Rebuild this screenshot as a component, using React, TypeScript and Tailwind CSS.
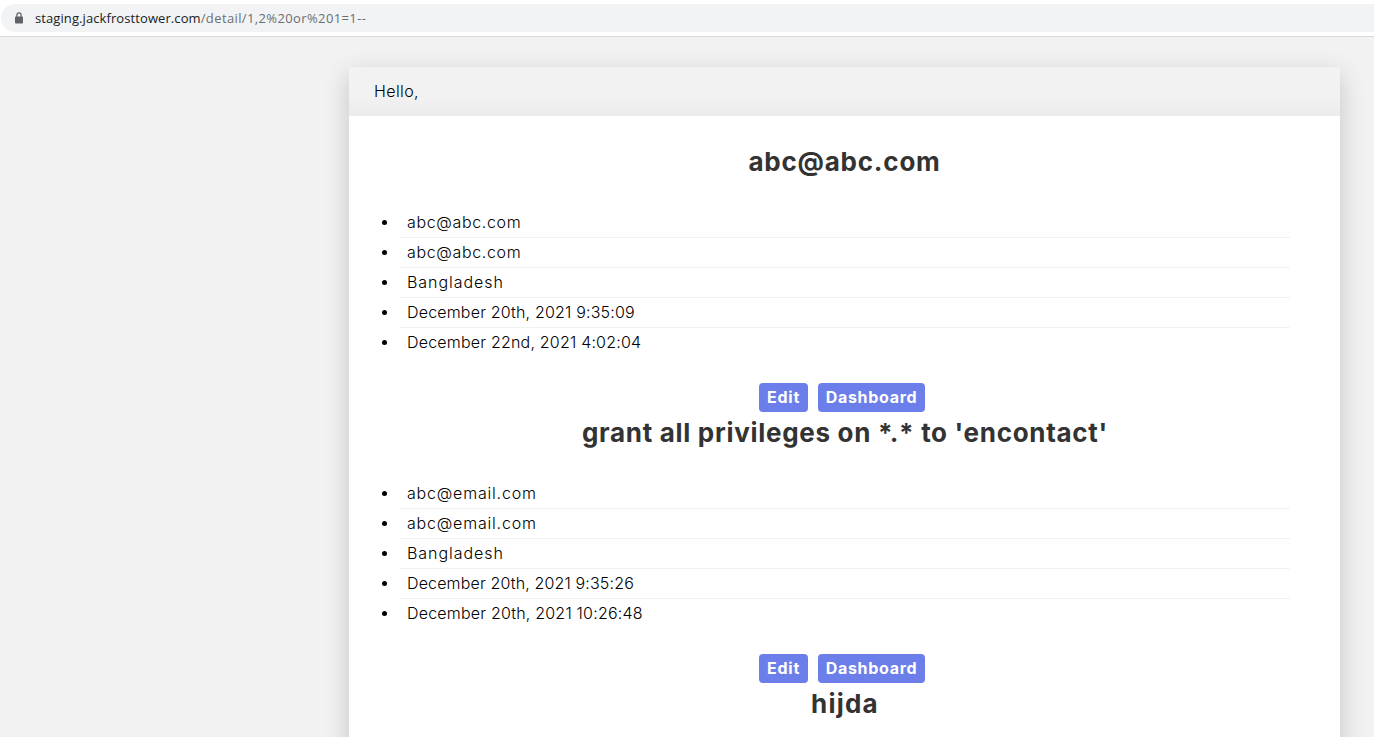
type Contact = { title: string; titleClass: string; rows: [string, string][] };

const contacts: Contact[] = [
  {
    title: "abc@abc.com",
    titleClass: "tracking-[0.78px]",
    rows: [
      ["abc@abc.com", "tracking-[0.65px]"],
      ["abc@abc.com", "tracking-[0.65px]"],
      ["Bangladesh", "tracking-[0.95px]"],
      ["December 20th, 2021 9:35:09", "tracking-[0.18px]"],
      ["December 22nd, 2021 4:02:04", "tracking-[0.2px]"],
    ],
  },
  {
    title: "grant all privileges on *.* to 'encontact'",
    titleClass: "tracking-[0.7px] pl-px",
    rows: [
      ["abc@email.com", "tracking-[0.8px]"],
      ["abc@email.com", "tracking-[0.8px]"],
      ["Bangladesh", "tracking-[0.95px]"],
      ["December 20th, 2021 9:35:26", "tracking-[0.15px]"],
      ["December 20th, 2021 10:26:48", "tracking-[0.2px]"],
    ],
  },
  { title: "hijda", titleClass: "tracking-[1.2px] pl-px", rows: [] },
];

function AddressBar() {
  return (
    <div className="h-[37px] shrink-0 border-b border-[#d9dadc] bg-white pt-1 pl-px">
      <div className="flex h-7 items-center rounded-l-full bg-[#f1f3f4] pl-[14px] font-['Open_Sans',sans-serif] text-[13px]">
        <svg width="8" height="12" viewBox="0 0 8 12" className="mr-3 shrink-0">
          <path d="M1.9 5V3a2.1 2.1 0 0 1 4.2 0v2" fill="none" stroke="#5f6368" strokeWidth="1.2" />
          <rect x="0" y="4.5" width="8" height="7" rx="0.8" fill="#5f6368" />
        </svg>
        <span className="pt-[2px] tracking-[0.09px] whitespace-nowrap text-[#202124]">staging.jackfrosttower.com</span>
        <span className="pt-[2px] tracking-[0.38px] whitespace-nowrap text-[#6b6f74]">/detail/1,2%20or%201=1--</span>
      </div>
    </div>
  );
}

function ContactBlock({ title, titleClass, rows }: Contact) {
  return (
    <section className="h-[271px]">
      <h1 className="flex h-8 items-center justify-center pb-[2px] text-[26px] font-bold whitespace-nowrap text-[#333]">
        <span className={titleClass}>{title}</span>
      </h1>
      {rows.length > 0 && (
        <>
          <ul className="mt-[30px] mr-[50px] ml-[50px]">
            {rows.map(([text, tracking], i) => (
              <li
                key={i}
                className="relative flex h-[30px] items-center border-b border-[#f2f2f2] pb-[2px] pl-2 text-base font-light text-black last:border-transparent"
              >
                <span className="absolute top-[12px] -left-[17px] h-[5px] w-[5px] rounded-full bg-black" />
                <span className={tracking}>{text}</span>
              </li>
            ))}
          </ul>
          <div className="mt-[25px] flex gap-[10px] pl-[410px] text-base font-bold text-white">
            <a className="flex h-[29px] w-[49px] items-center justify-center rounded-[4px] bg-[#6c7eea] pb-[2px] tracking-[0.8px]">Edit</a>
            <a className="flex h-[29px] w-[107px] items-center justify-center rounded-[4px] bg-[#6c7eea] pb-[2px] tracking-[0.7px]">Dashboard</a>
          </div>
        </>
      )}
    </section>
  );
}

export default function App() {
  return (
    <div className="flex h-[737px] w-[1374px] flex-col overflow-hidden bg-[#f2f2f2] font-[Inter,sans-serif]">
      <AddressBar />
      <div className="min-h-0 flex-1 overflow-hidden pt-[30px] pl-[349px]">
        <main className="h-[900px] w-[991px] shadow-[0_8px_25px_rgba(0,0,0,0.19)]">
          <header className="flex h-[49px] items-center bg-linear-to-b from-[#f2f2f2] from-60% to-[#ebebeb] pb-[2px] pl-[25px] text-base font-light text-black">
            <span className="tracking-[0.4px]">Hello,</span>
          </header>
          <div className="h-[851px] bg-white pt-[30px]">
            {contacts.map((c) => (
              <ContactBlock key={c.title} {...c} />
            ))}
          </div>
        </main>
      </div>
    </div>
  );
}
